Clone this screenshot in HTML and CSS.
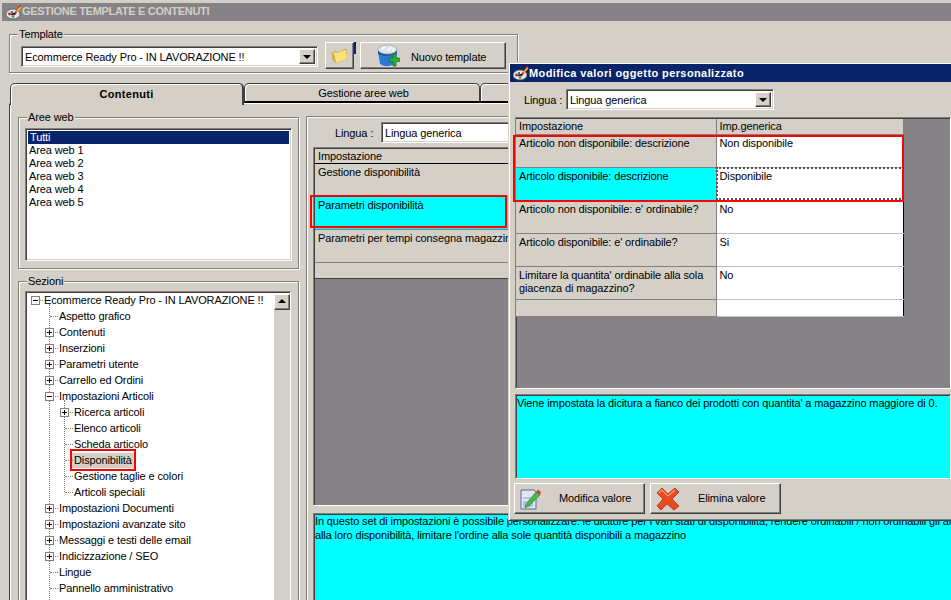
FILE: index.html
```html
<!DOCTYPE html>
<html lang="it">
<head>
<meta charset="utf-8">
<title>Gestione template e contenuti</title>
<link rel="stylesheet" href="styles.css">
</head>
<body>
<svg class="defs" width="0" height="0" aria-hidden="true">
  <symbol id="palette" viewBox="0 0 16 16">
    <ellipse cx="7" cy="10" rx="7" ry="5" fill="#e8e8e8" stroke="#555" stroke-width=".8"/>
    <circle cx="3.5" cy="10" r="1.4" fill="#d02020"/>
    <circle cx="7" cy="12.5" r="1.3" fill="#20a030"/>
    <circle cx="6" cy="8" r="1.1" fill="#2040c0"/>
    <path d="M8 11 L14.5 1.5" stroke="#e02020" stroke-width="2"/>
    <path d="M10.5 7.5 L15 3" stroke="#f0d020" stroke-width="1.4"/>
    <path d="M5 10.5 L9 9.5" stroke="#111" stroke-width="1.4"/>
  </symbol>
</svg>
<div class="app">
  <header class="titlebar">
    <svg class="title-icon"><use href="#palette"/></svg>
    <span>GESTIONE TEMPLATE E CONTENUTI</span>
  </header>

  <fieldset class="group template-group">
    <legend>Template</legend>
    <div class="template-row">
      <div class="combo template-combo"><span class="combo-text">Ecommerce Ready Pro - IN LAVORAZIONE !!</span><span class="combo-btn"></span></div>
      <button class="btn folder-btn" type="button" aria-label="Apri">
        <svg width="18" height="18" viewBox="0 0 18 18">
          <path d="M1 6 L5 4 L6 6 L15 2 L16 12 L5 16 L2 13 Z" fill="#f4d25a" stroke="#b8a070" stroke-width=".8"/>
          <path d="M3 7 L15 3 L16 12 L5 16 Z" fill="#fbe27c"/>
          <path d="M1 6 L3 7 L5 16 L2 13 Z" fill="#d9a93a"/>
        </svg>
      </button>
      <span class="focus-stub"></span>
      <button class="btn new-btn" type="button">
        <svg class="new-icon" width="24" height="24" viewBox="0 0 24 24">
          <path d="M2 7 Q11 2 21 6 L20 19 Q12 25 4 20 Z" fill="#2a78d8"/>
          <path d="M2 7 Q11 11 21 6 L21 9 Q11 14 2 10 Z" fill="#174f9e"/>
          <ellipse cx="11.500" cy="5.500" rx="9.500" ry="4.500" fill="#dfe4e8" stroke="#9aa4ae" stroke-width=".7"/>
          <path d="M6 5 L9 2.500 M12 7 L15 3 M16 6.500 L18 4" stroke="#ffffff" stroke-width="1.400"/>
          <path d="M13 14 H17 V10 H20 V14 H23.500 V17.500 H20 V22 H17 V17.500 H13 Z" fill="#2fb02f" stroke="#0e6e1e" stroke-width=".7"/>
        </svg>
        <span class="btn-label">Nuovo template</span>
      </button>
    </div>
  </fieldset>

  <div class="tabs">
    <div class="tab tab-active">Contenuti</div>
    <div class="tab tab-second">Gestione aree web</div>
    <div class="tab tab-third"></div>
  </div>

  <main class="panel">
    <div class="left-col">
      <fieldset class="group areas-group">
        <legend>Aree web</legend>
        <ul class="listbox">
          <li class="list-selected">Tutti</li>
          <li>Area web 1</li>
          <li>Area web 2</li>
          <li>Area web 3</li>
          <li>Area web 4</li>
          <li>Area web 5</li>
        </ul>
      </fieldset>
      <fieldset class="group sections-group">
        <legend>Sezioni</legend>
        <div class="tree">
          <div class="tree-body">
            <span class="guide guide-main"></span>
            <span class="guide guide-sub"></span>
            <div class="node root"><span class="exp minus"></span><span class="dash"></span>Ecommerce Ready Pro - IN LAVORAZIONE !!</div>
            <div class="node l1"><span class="dash"></span>Aspetto grafico</div>
            <div class="node l1"><span class="exp plus"></span><span class="dash"></span>Contenuti</div>
            <div class="node l1"><span class="exp plus"></span><span class="dash"></span>Inserzioni</div>
            <div class="node l1"><span class="exp plus"></span><span class="dash"></span>Parametri utente</div>
            <div class="node l1"><span class="exp plus"></span><span class="dash"></span>Carrello ed Ordini</div>
            <div class="node l1"><span class="exp minus"></span><span class="dash"></span>Impostazioni Articoli</div>
            <div class="node l2"><span class="exp plus"></span><span class="dash"></span>Ricerca articoli</div>
            <div class="node l2"><span class="dash"></span>Elenco articoli</div>
            <div class="node l2"><span class="dash"></span>Scheda articolo</div>
            <div class="node l2"><span class="dash"></span><span class="node-selected">Disponibilità</span></div>
            <div class="node l2"><span class="dash"></span>Gestione taglie e colori</div>
            <div class="node l2"><span class="dash"></span>Articoli speciali</div>
            <div class="node l1"><span class="exp plus"></span><span class="dash"></span>Impostazioni Documenti</div>
            <div class="node l1"><span class="exp plus"></span><span class="dash"></span>Impostazioni avanzate sito</div>
            <div class="node l1"><span class="exp plus"></span><span class="dash"></span>Messaggi e testi delle email</div>
            <div class="node l1"><span class="exp plus"></span><span class="dash"></span>Indicizzazione / SEO</div>
            <div class="node l1"><span class="dash"></span>Lingue</div>
            <div class="node l1"><span class="dash"></span>Pannello amministrativo</div>
            <div class="node l1"><span class="dash"></span>Dichiarazioni e condizioni di vendita</div>
          </div>
          <div class="scrollbar"><span class="scroll-up"></span></div>
        </div>
      </fieldset>
    </div>

    <section class="right-col">
      <div class="lang-row main-lang">
        <span class="lang-label">Lingua :</span>
        <div class="combo main-combo"><span class="combo-text">Lingua generica</span></div>
      </div>
      <div class="grid-area main-grid-area">
        <div class="main-grid">
          <div class="main-head">Impostazione</div>
          <div class="main-row">Gestione disponibilità</div>
          <div class="main-row main-row-current">Parametri disponibilità</div>
          <div class="main-row">Parametri per tempi consegna magazzino</div>
          <div class="main-row main-row-empty"></div>
        </div>
      </div>
      <div class="memo main-memo">In questo set di impostazioni è possibile personalizzare: le diciture per i vari stati di disponibilità, rendere ordinabili / non ordinabili gli articoli in base<br>alla loro disponibilità, limitare l'ordine alla sole quantità disponibili a magazzino</div>
    </section>
  </main>

  <span class="redbox red-main"></span>
  <span class="redbox red-tree"></span>

  <aside class="dialog">
    <header class="dialog-title">
      <svg class="title-icon"><use href="#palette"/></svg>
      <span>Modifica valori oggetto personalizzato</span>
    </header>
    <div class="lang-row dialog-lang">
      <span class="lang-label">Lingua :</span>
      <div class="combo dialog-combo"><span class="combo-text">Lingua generica</span><span class="combo-btn"></span></div>
    </div>
    <div class="grid-area dialog-grid-area">
      <table class="dialog-grid">
        <thead><tr><th>Impostazione</th><th>Imp.generica</th></tr></thead>
        <tbody>
          <tr class="r32"><th>Articolo non disponibile: descrizione</th><td>Non disponibile</td></tr>
          <tr class="r32 row-current"><th>Articolo disponibile: descrizione</th><td class="cell-focus">Disponibile</td></tr>
          <tr class="r32"><th>Articolo non disponibile: e' ordinabile?</th><td>No</td></tr>
          <tr class="r32"><th>Articolo disponibile: e' ordinabile?</th><td>Si</td></tr>
          <tr class="r33"><th>Limitare la quantita' ordinabile alla sola<br>giacenza di magazzino?</th><td>No</td></tr>
          <tr class="r16"><th></th><td></td></tr>
        </tbody>
      </table>
    </div>
    <div class="memo dialog-memo">Viene impostata la dicitura a fianco dei prodotti con quantita' a magazzino maggiore di 0.</div>
    <div class="dialog-actions">
      <button class="btn action-btn" type="button">
        <svg width="22" height="22" viewBox="0 0 22 22">
          <path d="M1 2 H14 L16 4 V21 H1 Z" fill="#dfe6f4" stroke="#5a6a94"/>
          <path d="M3 9 H13 V11 H3 Z M3 13 H13 V19 H3 Z" fill="#b3c2e2"/>
          <path d="M6 16 L16 4 L20 7 L9 18 L5 20 Z" fill="#46b946" stroke="#2f7f2f" stroke-width=".6"/>
          <path d="M16 4 L18 1.500 L21 4.500 L20 7 Z" fill="#d83b2b"/>
        </svg>
        <span class="btn-label">Modifica valore</span>
      </button>
      <button class="btn action-btn" type="button">
        <svg width="24" height="24" viewBox="0 0 24 24">
          <path d="M1 6 L6 1 L12 7 L19 1 L23 5 L16 12 L23 19 L18 23 L11 17 L5 23 L1 19 L7 12 Z" fill="#ea4a1f" stroke="#b32a12" stroke-width=".8"/>
          <path d="M3 6 L6 3 L12 9 L19 3" fill="none" stroke="#ff9a70" stroke-width="1.200"/>
        </svg>
        <span class="btn-label">Elimina valore</span>
      </button>
    </div>
    <span class="redbox red-dialog"></span>
  </aside>
</div>
</body>
</html>
```
FILE: styles.css
```css
* { box-sizing: border-box; }
html, body { margin: 0; height: 100%; overflow: hidden; }
body {
  background: #d4d0c8;
  color: #000;
  font: 11px/13px "Liberation Sans", Arial, sans-serif;
  letter-spacing: -0.12px;
}
.defs { position: absolute; }
.app { position: relative; width: 951px; height: 600px; overflow: hidden; }

/* title bars */
.titlebar {
  display: flex; align-items: center;
  height: 18px; margin: 3px 0 0 2px; padding: 0 0 1px 4px;
  background: #858387; color: #d4d0c8;
  font-weight: 700; letter-spacing: -0.3px;
}
.title-icon { width: 16px; height: 16px; flex: none; }

/* group box */
.group {
  margin: 0; padding: 0; min-width: 0;
  border: 1px solid #808080;
  box-shadow: inset 1px 1px 0 #fff, 1px 1px 0 #fff;
}
.group legend {
  margin-left: 8px; padding: 0 1px;
  background: #d4d0c8; line-height: 13px;
}

/* 3D controls */
.btn {
  display: flex; align-items: center; padding: 0;
  font: inherit; letter-spacing: inherit; color: #000; background: #d4d0c8;
  border: 1px solid; border-color: #fff #404040 #404040 #fff;
  box-shadow: inset -1px -1px 0 #808080;
}
.combo {
  position: relative; display: flex; align-items: center; height: 21px;
  background: #fff;
  border: 1px solid; border-color: #808080 #fff #fff #808080;
  box-shadow: inset 1px 1px 0 #404040, inset -1px -1px 0 #d4d0c8;
}
.combo-text { padding: 1px 0 0 3px; white-space: nowrap; }
.combo-btn {
  position: absolute; top: 2px; right: 2px; bottom: 2px; width: 16px;
  background: #d4d0c8;
  border: 1px solid; border-color: #fff #404040 #404040 #fff;
  box-shadow: inset -1px -1px 0 #808080;
}
.combo-btn::after {
  content: ""; position: absolute; left: 3px; top: 5px;
  border: 4px solid transparent; border-top-color: #000; border-bottom: 0;
}
.lang-label { padding-top: 1px; }

/* template group */
.template-group { width: 509px; height: 45px; margin: 7px 0 0 9px; }
.template-row { display: flex; align-items: flex-start; padding: 1px 0 0 11px; }
.template-combo { width: 297px; margin-top: 4px; }
.folder-btn { width: 29px; height: 27px; margin-left: 7px; justify-content: center; }
.focus-stub { width: 2px; height: 12px; background: #0a246a; margin-right: 4px; }
.new-btn { width: 146px; height: 27px; padding-left: 15px; }
.new-btn .btn-label { margin: 3px 0 0 11px; }

/* tabs */
.tabs { display: flex; align-items: flex-end; height: 20px; margin: 10px 0 0 10px; position: relative; z-index: 1; }
.tab {
  display: flex; align-items: center; justify-content: center;
  background: #d4d0c8;
  border: 1px solid #404040; border-bottom: 0;
  border-radius: 5px 5px 0 0;
  box-shadow: inset 1px 1px 0 #fff;
}
.tab-active { width: 234px; height: 22px; margin-bottom: -2px; font-weight: 700; letter-spacing: 0.3px; border-right: 2px solid #404040; }
.tab-second { width: 236px; height: 20px; padding: 2px 0 0 3px; border-bottom: 2px solid #000; }
.tab-third { flex: 1; height: 20px; border-bottom: 2px solid #000; }

/* panel */
.panel {
  display: flex; align-items: flex-start; gap: 7px;
  height: 497px; margin-left: 9px; padding: 7px 0 0 8px;
  border-left: 1px solid #404040;
  border-top: 1px solid #fff;
  box-shadow: inset 1px 0 0 #fff;
}
.left-col { display: flex; flex-direction: column; gap: 6px; width: 281px; flex: none; }

.areas-group { height: 158px; }
.listbox {
  list-style: none; margin: 4px 6px 0; padding: 2px 2px 0 2px; height: 133px;
  background: #fff;
  border: 1px solid; border-color: #808080 #fff #fff #808080;
  box-shadow: inset 1px 1px 0 #404040, inset -1px -1px 0 #d4d0c8;
}
.listbox li { height: 13px; padding-left: 1px; white-space: nowrap; }
.listbox .list-selected { background: #0a246a; color: #fff; padding-left: 2px; }

.sections-group { height: 330px; }
.tree {
  display: flex; height: 330px; margin: 3px 7px 0 6px;
  background: #fff;
  border: 1px solid; border-color: #808080 #fff #fff #808080;
  box-shadow: inset 1px 1px 0 #404040;
}
.tree-body { position: relative; flex: 1; overflow: hidden; }
.scrollbar { position: relative; width: 16px; margin: 2px 0 0 0; background: #d4d0c8; flex: none; }
.scroll-up {
  position: absolute; top: 0; left: 0; width: 16px; height: 16px;
  background: #d4d0c8;
  border: 1px solid; border-color: #fff #404040 #404040 #fff;
  box-shadow: inset -1px -1px 0 #808080;
}
.scroll-up::after {
  content: ""; position: absolute; left: 3px; top: 4px;
  border: 4px solid transparent; border-bottom-color: #000; border-top: 0;
}
.node { position: relative; display: flex; align-items: center; height: 16px; white-space: nowrap; }
.root { padding-left: 18px; }
.l1 { padding-left: 33px; }
.l2 { padding-left: 48px; }
.exp {
  position: absolute; top: 4px; width: 9px; height: 9px;
  background: #fff; border: 1px solid #808080; z-index: 1;
}
.exp::before { content: ""; position: absolute; left: 1px; top: 3px; width: 5px; height: 1px; background: #000; }
.plus::after { content: ""; position: absolute; left: 3px; top: 1px; width: 1px; height: 5px; background: #000; }
.root .exp { left: 5px; }
.l1 .exp { left: 19px; }
.l2 .exp { left: 34px; }
.dash {
  position: absolute; top: 8px; height: 1px;
  border-top: 1px dotted #808080;
}
.root .dash { left: 14px; width: 3px; }
.l1 .dash { left: 24px; width: 8px; }
.l2 .dash { left: 39px; width: 8px; }
.guide { position: absolute; width: 1px; border-left: 1px dotted #808080; }
.guide-main { left: 23px; top: 12px; height: 320px; }
.guide-sub { left: 38px; top: 108px; height: 92px; }
.node-selected { background: #d4d0c8; padding: 0 2px; margin-left: -2px; line-height: 15px; }

/* right column */
.right-col {
  flex: none; width: 660px; height: 490px; margin-top: 5px;
  border-top: 1px solid #808080; border-left: 1px solid #808080;
  box-shadow: inset 1px 1px 0 #fff;
  padding: 0 0 0 6px;
}
.lang-row { display: flex; align-items: center; }
.main-lang { height: 30px; padding: 1px 0 0 22px; }
.main-lang .lang-label { width: 46px; }
.main-combo { width: 260px; }
.grid-area { background: #858387; }
.main-grid-area {
  height: 359px;
  border: 1px solid; border-color: #808080 #fff #fff #808080;
  box-shadow: inset 1px 1px 0 #404040;
  padding: 1px 0 0 1px;
}
.main-grid { width: 300px; }
.main-head { height: 15px; padding: 1px 0 0 3px; background: #d4d0c8; border-bottom: 1px solid #000; }
.main-row { height: 33px; padding: 2px 0 0 3px; background: #d4d0c8; border-bottom: 1px solid #808080; white-space: nowrap; }
.main-row-current { background: #00ffff; }
.main-row-empty { height: 16px; border-bottom-color: #404040; }
.memo {
  background: #00ffff; white-space: nowrap; line-height: 14px;
  border: 1px solid; border-color: #808080 #fff #fff #808080;
  box-shadow: inset 1px 1px 0 #404040;
}
.main-memo { height: 100px; margin-top: 7px; padding: 0 0 0 1px; }

/* dialog */
.dialog {
  position: absolute; z-index: 3; left: 508px; top: 62px; width: 443px; height: 459px;
  background: #d4d0c8;
  border-top: 1px solid #d4d0c8; border-left: 1px solid #d4d0c8; border-bottom: 1px solid #404040;
  box-shadow: inset 1px 1px 0 #fff, inset 0 -1px 0 #808080;
  padding: 1px 0 0 1px;
}
.dialog-title {
  display: flex; align-items: center;
  height: 18px; padding-left: 3px;
  background: #0a246a; color: #fff; font-weight: 700; letter-spacing: 0.4px;
}
.dialog-lang { height: 35px; padding-left: 14px; }
.dialog-lang .lang-label { width: 42px; }
.dialog-combo { width: 208px; }
.dialog-grid-area {
  height: 272px; margin-left: 5px;
  border: 1px solid; border-color: #808080 #fff #fff #808080;
  box-shadow: inset 1px 1px 0 #404040;
  padding: 1px 0 0 0;
}
.dialog-grid {
  width: 388px; table-layout: fixed; border-collapse: collapse;
  background: #d4d0c8; border-bottom: 1px solid #000; border-right: 1px solid #000;
}
.dialog-grid th, .dialog-grid td {
  padding: 2px 2px 0 3px; font-weight: 400; text-align: left; vertical-align: top;
  border-bottom: 1px solid #808080; border-right: 1px solid #808080;
}
.dialog-grid th:first-child { width: 200px; }
.dialog-grid thead th { height: 15px; font-weight: 400; background: #d4d0c8; padding-top: 1px; }
.dialog-grid td { background: #fff; border-bottom-color: #c0c0c0; border-right: 0; }
.r32 th, .r32 td { height: 33px; }
.r33 th, .r33 td { height: 33px; }
.r16 th, .r16 td { height: 17px; }
.row-current th { background: #00ffff; }
.dialog-grid .cell-focus { outline: 2px dotted #555; outline-offset: -2px; }
.dialog-memo { height: 85px; margin: 5px 0 0 5px; padding: 1px 0 0 1px; }
.dialog-actions { display: flex; gap: 5px; margin: 4px 0 0 4px; }
.action-btn { width: 131px; height: 31px; padding-left: 5px; }
.action-btn .btn-label { margin-left: 17px; }
.action-btn + .action-btn .btn-label { margin-left: 18px; }

/* red annotations */
.redbox { position: absolute; border: 2px solid #f00; z-index: 2; }
.red-main { left: 310px; top: 195px; width: 197px; height: 33px; }
.red-tree { left: 70px; top: 449px; width: 66px; height: 22px; }
.red-dialog { left: 4px; top: 72px; width: 391px; height: 67px; }
```
